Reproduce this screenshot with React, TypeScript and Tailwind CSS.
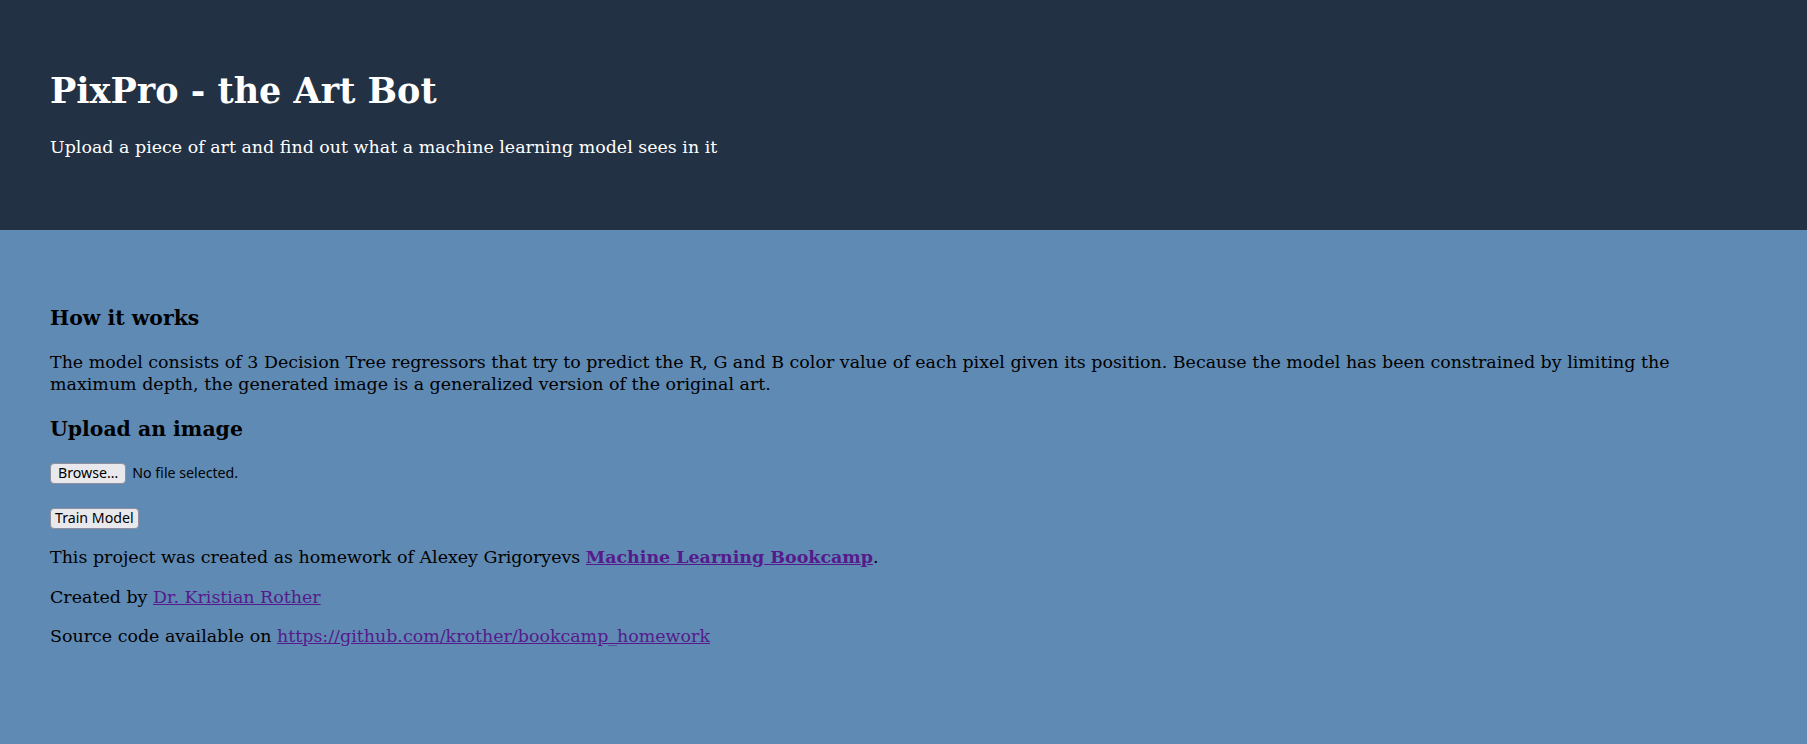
export default function App() {
  return (
    <div className="min-h-[744px] bg-[#5f8ab4] font-['DejaVu_Serif',serif] text-black">
      <header className="bg-[#223143] px-[50px] pt-[72px] h-[230px] text-white">
        <h1 className="text-[35px] font-bold leading-[38px]">PixPro - the Art Bot</h1>
        <p className="mt-[26px] text-[17.45px] leading-[22px]">
          Upload a piece of art and find out what a machine learning model sees in it
        </p>
      </header>
      <main className="px-[50px] pt-[75px] text-[17.45px] leading-[22px]">
        <h2 className="text-[20.4px] font-bold leading-[26px]">How it works</h2>
        <p className="mt-[20px]">
          The model consists of 3 Decision Tree regressors that try to predict the R, G and B color value of each pixel given its position. Because the model has been constrained by limiting the maximum depth, the generated image is a generalized version of the original art.
        </p>
        <h2 className="mt-[21px] text-[20.4px] font-bold leading-[26px]">Upload an image</h2>
        <div className="mt-[20px] flex items-center gap-[6px] font-['Noto_Sans',sans-serif] text-[14.2px]">
          <button className="h-[21px] px-[7px] rounded-[4px] border border-[#8f8f9d] bg-[#e9e9ed] leading-none">
            Browse…
          </button>
          <span>No file selected.</span>
        </div>
        <div className="mt-[23px] font-['Noto_Sans',sans-serif] text-[14.2px]">
          <button className="h-[21px] px-[4px] rounded-[4px] border border-[#8f8f9d] bg-[#e9e9ed] leading-none">
            Train Model
          </button>
        </div>
        <p className="mt-[17px]">
          This project was created as homework of Alexey Grigoryevs{" "}
          <a href="#" className="font-bold text-[#551a8b] underline">Machine Learning Bookcamp</a>.
        </p>
        <p className="mt-[18px]">
          Created by <a href="#" className="text-[#551a8b] underline">Dr. Kristian Rother</a>
        </p>
        <p className="mt-[17px]">
          Source code available on{" "}
          <a href="#" className="text-[#551a8b] underline">https://github.com/krother/bookcamp_homework</a>
        </p>
      </main>
    </div>
  );
}
